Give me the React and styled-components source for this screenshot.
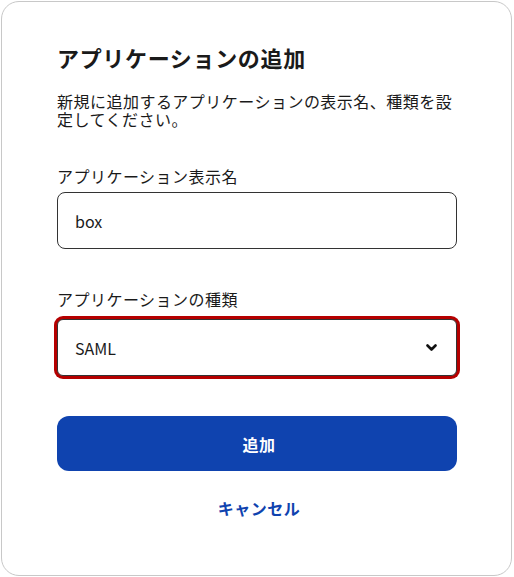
import React, { useState } from 'react';
import styled, { createGlobalStyle } from 'styled-components';

const GlobalStyle = createGlobalStyle`
  html, body {
    margin: 0;
    padding: 0;
    background: #ffffff;
  }
  body {
    font-family: "Noto Sans CJK JP", "Noto Sans", sans-serif;
    color: #1a1a1a;
  }
`;

const Page = styled.div`
  padding: 1px 2px 1px 1px;
`;

const Card = styled.div`
  box-sizing: border-box;
  width: 511px;
  height: 575px;
  border: 1px solid #c8c8c8;
  border-radius: 18px;
  background: #fff;
  padding: 38px 54px 0 55px;
`;

const Title = styled.h2`
  margin: 0;
  font-size: 22px;
  font-weight: 700;
  line-height: 34px;
  letter-spacing: 0.03em;
  color: #1a1a1a;
`;

const Description = styled.p`
  margin: 18px 0 0;
  font-size: 16px;
  line-height: 18px;
  letter-spacing: 0.03em;
  color: #1a1a1a;
`;

const Field = styled.div`
  display: flex;
  flex-direction: column;
  gap: ${(p) => p.$gap}px;
  margin-top: ${(p) => p.$top}px;
`;

const Label = styled.label`
  font-size: 16px;
  line-height: 22px;
  letter-spacing: 0.03em;
  color: #1a1a1a;
`;

const Input = styled.input`
  box-sizing: border-box;
  width: 400px;
  height: 57px;
  border: 1px solid #333;
  border-radius: 8px;
  padding: 0 17px;
  font-family: inherit;
  font-size: 16px;
  color: #1a1a1a;
  outline: none;
`;

const SelectWrap = styled.div`
  position: relative;
  width: 400px;
`;

const Select = styled.select`
  box-sizing: border-box;
  appearance: none;
  width: 400px;
  height: 57px;
  border: 1px solid #333;
  border-radius: 6px;
  padding: 0 17px;
  font-family: inherit;
  font-size: 16px;
  color: #1a1a1a;
  background: #fff;
  outline: none;
  box-shadow: 0 0 0 3px #b50000;
`;

const Chevron = styled.svg`
  position: absolute;
  right: 20px;
  top: 50%;
  transform: translateY(-50%);
  pointer-events: none;
`;

const Actions = styled.div`
  display: flex;
  flex-direction: column;
  align-items: center;
  margin-top: 40px;
  width: 400px;
`;

const PrimaryButton = styled.button`
  width: 400px;
  height: 55px;
  border: none;
  border-radius: 12px;
  background: #0f43af;
  color: #fff;
  font-family: inherit;
  font-size: 16px;
  font-weight: 700;
  letter-spacing: 0.03em;
  padding: 0 0 0 4px;
  cursor: pointer;
`;

const TextButton = styled.button`
  margin-top: 23px;
  border: none;
  background: none;
  color: #0f43af;
  font-family: inherit;
  font-size: 16px;
  font-weight: 700;
  letter-spacing: 0.03em;
  padding: 0 0 0 4px;
  line-height: 28px;
  cursor: pointer;
`;

export default function App() {
  const [name, setName] = useState('box');
  const [type, setType] = useState('SAML');

  return (
    <Page>
      <GlobalStyle />
      <Card>
        <Title>アプリケーションの追加</Title>
        <Description>
          新規に追加するアプリケーションの表示名、種類を設定してください。
        </Description>

        <Field $top={37} $gap={5}>
          <Label htmlFor="app-name">アプリケーション表示名</Label>
          <Input id="app-name" value={name} onChange={(e) => setName(e.target.value)} />
        </Field>

        <Field $top={39} $gap={9}>
          <Label htmlFor="app-type">アプリケーションの種類</Label>
          <SelectWrap>
            <Select id="app-type" value={type} onChange={(e) => setType(e.target.value)}>
              <option value="SAML">SAML</option>
              <option value="OIDC">OIDC</option>
            </Select>
            <Chevron width="11" height="8" viewBox="0 0 11 8">
              <path d="M1.5 1.5 L5.5 5.5 L9.5 1.5" fill="none" stroke="#111" strokeWidth="2.6" strokeLinecap="round" strokeLinejoin="round" />
            </Chevron>
          </SelectWrap>
        </Field>

        <Actions>
          <PrimaryButton>追加</PrimaryButton>
          <TextButton>キャンセル</TextButton>
        </Actions>
      </Card>
    </Page>
  );
}
